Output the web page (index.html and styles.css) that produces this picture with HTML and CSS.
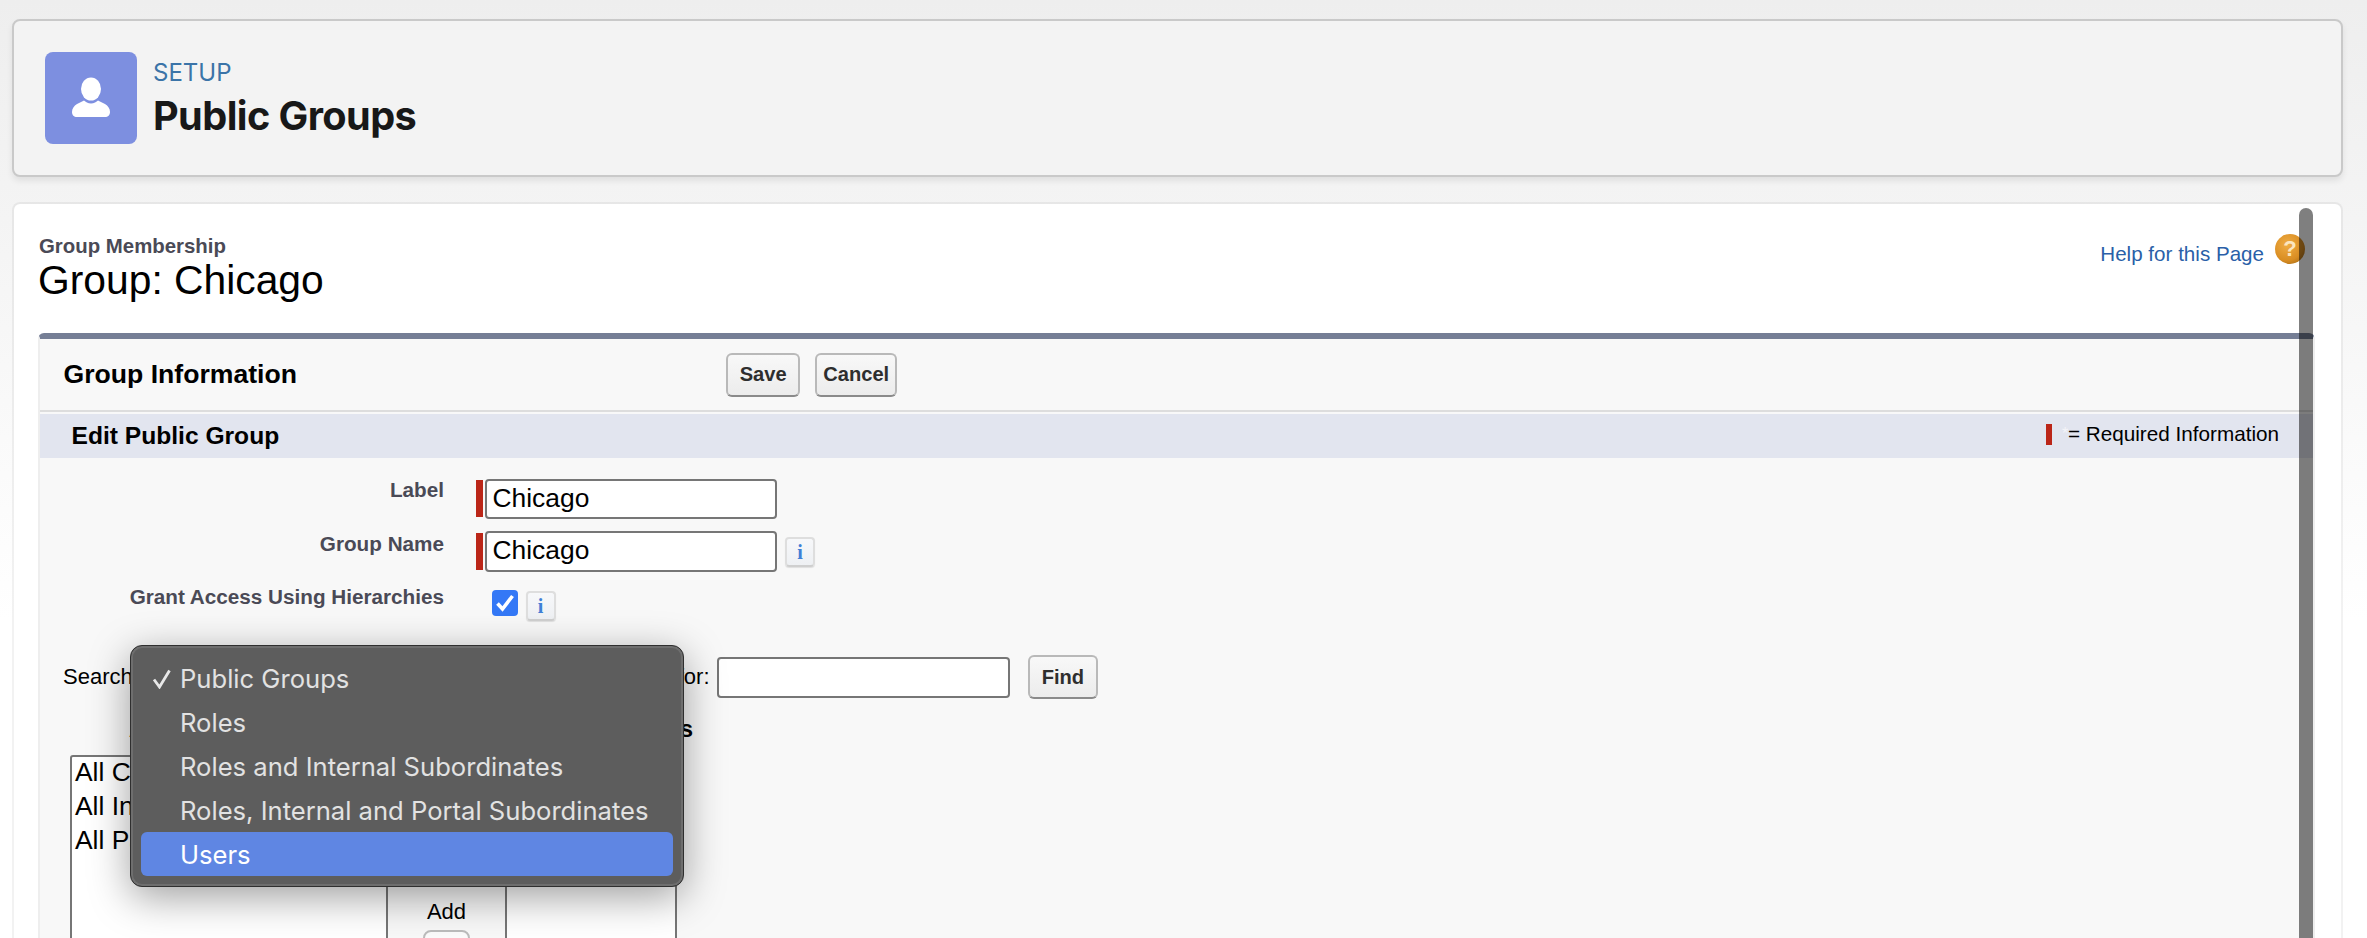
FILE: index.html
```html
<!DOCTYPE html>
<html lang="en">
<head>
<meta charset="utf-8">
<title>Public Groups</title>
<link rel="stylesheet" href="styles.css">
</head>
<body>
<header class="page-header">
  <div class="hero-icon">
    <svg viewBox="0 0 92 92" width="92" height="92"><ellipse cx="46" cy="37" rx="10" ry="11.5" fill="#fff"/><path fill="#fff" d="M27 60c0-3.500 2-6 5-8l7-3.500c1.500 1.500 4 3 7 3s5.500-1.500 7-3l7 3.500c3 2 5 4.500 5 8 0 3-2 5-5 5H32c-3 0-5-2-5-5z"/></svg>
  </div>
  <div class="hero-text">
    <div class="hero-label">SETUP</div>
    <h1 class="hero-title">Public Groups</h1>
  </div>
</header>
<main class="card">
  <div class="title-row">
    <div>
      <div class="subtitle">Group Membership</div>
      <div class="title">Group: Chicago</div>
    </div>
    <div class="help"><a class="help-link">Help for this Page</a><span class="help-icon">?</span></div>
  </div>
  <section class="panel">
    <div class="panel-head">
      <h2 class="panel-title">Group Information</h2>
      <button class="btn">Save</button>
      <button class="btn btn-tight">Cancel</button>
    </div>
    <div class="section-bar">
      <h3 class="section-title">Edit Public Group</h3>
      <div class="required"><span class="req-mark"></span><span class="req-star">*</span><span>= Required Information</span></div>
    </div>
    <div class="form">
      <div class="row row-label">
        <label class="field-label">Label</label>
        <span class="req-bar"></span>
        <input class="text-input" type="text" value="Chicago">
      </div>
      <div class="row row-name">
        <label class="field-label">Group Name</label>
        <span class="req-bar"></span>
        <input class="text-input" type="text" value="Chicago">
        <span class="info info-name">i</span>
      </div>
      <div class="row row-grant">
        <label class="field-label">Grant Access Using Hierarchies</label>
        <span class="checkbox"><svg viewBox="0 0 26 26" width="26" height="26"><path d="M5.500 13.500l5 5.500 10-13" fill="none" stroke="#fff" stroke-width="3.600"/></svg></span>
        <span class="info info-grant">i</span>
      </div>
    </div>
    <div class="search-row">
      <span>Search</span>
      <select class="search-select"><option>Public Groups</option></select>
      <span>for:</span>
      <input class="search-input" type="text">
      <button class="btn btn-find">Find</button>
    </div>
    <div class="list-heads"><span>Available Members</span><span>Selected Members</span></div>
    <div class="lists">
      <div class="listbox">
        <div class="opt">All Customer Portal Users</div>
        <div class="opt">All Internal Users</div>
        <div class="opt">All Partner Users</div>
      </div>
      <div class="move">
        <div class="move-label">Add</div>
        <button class="move-btn" aria-label="Add"></button>
      </div>
      <div class="listbox"></div>
    </div>
  </section>
  <div class="scrollbar"></div>
</main>
<div class="menu">
  <div class="menu-item"><svg class="menu-check" viewBox="0 0 20 20" width="20" height="20"><path d="M2 10.500l5.500 7.500L17.500 1.500" fill="none" stroke="#e8e8e8" stroke-width="2.800"/></svg>Public Groups</div>
  <div class="menu-item">Roles</div>
  <div class="menu-item">Roles and Internal Subordinates</div>
  <div class="menu-item">Roles, Internal and Portal Subordinates</div>
  <div class="menu-item menu-active">Users</div>
</div>
</body>
</html>
```
FILE: styles.css
```css
* { box-sizing: border-box; }
html, body { margin: 0; height: 938px; overflow: hidden; }
body {
  position: relative;
  padding: 19px 24px 0 12px;
  background: linear-gradient(#eeeeee, #ffffff 620px);
  font-family: "Liberation Sans", Arial, sans-serif;
  color: #000;
}
h1, h2, h3 { margin: 0; }

.page-header {
  height: 158px;
  display: flex;
  align-items: center;
  gap: 16px;
  padding-left: 31px;
  background: #f3f3f3;
  border: 2px solid #c9c9c9;
  border-radius: 8px;
  box-shadow: 0 4px 6px rgba(0,0,0,.08);
}
.hero-icon { width: 92px; height: 92px; background: #7d8fe0; border-radius: 8px; flex: none; }
.hero-icon svg { display: block; }
.hero-text { font-family: Inter, "Noto Sans", sans-serif; padding-top: 3px; }
.hero-label { font-size: 24px; line-height: 28px; color: #3b74a8; }
.hero-title { font-size: 39.700px; line-height: 50px; font-weight: 700; color: #181818; letter-spacing: -.6px; margin-top: 4px; }

.card {
  position: relative;
  height: 734px;
  margin: 27px 2px 0;
  padding: 30px 26px 0 24px;
  background: #fff;
  border-radius: 6px 6px 0 0;
  box-shadow: 0 0 0 2px rgba(0,0,0,.05);
  overflow: hidden;
}
.title-row { display: flex; justify-content: space-between; align-items: flex-start; height: 99px; }
.subtitle { font-size: 20.400px; line-height: 24px; font-weight: 700; color: #4a4a56; padding-left: 1px; }
.title { font-size: 40.800px; line-height: 44px; }
.help { display: flex; align-items: flex-start; gap: 11px; margin-right: 10px; }
.help-link { font-size: 20.600px; line-height: 30px; padding-top: 5px; color: #2a5fa8; }
.help-icon {
  width: 30px; height: 30px; border-radius: 50%;
  display: flex; align-items: center; justify-content: center;
  background: radial-gradient(circle at 40% 35%, #f0ad45, #d98d22 60%, #8f5e14);
  color: #fbe6c0; font-weight: 700; font-size: 22px;
}

.panel {
  height: 605px;
  overflow: hidden;
  background: #f8f8f8;
  border: 2px solid #eeeeee;
  border-width: 6px 2px 0;
  border-top-color: #757e95;
  border-radius: 6px 6px 0 0;
}
.panel-head {
  height: 71px;
  display: flex;
  align-items: center;
  gap: 15px;
  padding-left: 23.500px;
}
.panel-title { font-size: 26.600px; font-weight: 700; width: 647.500px; flex: none; }
.btn {
  height: 44px;
  padding: 0 11.700px;
  font: 700 20.100px "Liberation Sans", Arial, sans-serif;
  color: #2e2e2e;
  background: linear-gradient(#f8f8f8, #ececec);
  border: 2px solid #b9b9b9;
  border-bottom-color: #8a8a8a;
  border-radius: 6px;
}
.btn-tight { padding: 0 6px; }
.section-bar {
  height: 48px;
  padding: 4px 34px 0 31.500px;
  display: flex;
  justify-content: space-between;
  align-items: center;
  border-top: 2px solid #dddddd;
  background: linear-gradient(#f8f8f8 2px, #e2e5ef 2px);
}
.section-title { font-size: 24.600px; font-weight: 700; padding-bottom: 2px; }
.required { display: flex; align-items: center; font-size: 20.700px; padding-bottom: 6px; }
.req-mark { width: 6px; height: 21px; background: #bb2618; }
.req-star { color: #f4f4f8; width: 16px; padding-left: 10px; font-size: 16px; }

.form { padding-top: 20px; }
.row { display: flex; align-items: flex-start; }
.row-label { margin-bottom: 12px; }
.row-name { margin-bottom: 13px; height: 41px; }
.row-grant { height: 34px; }
.field-label {
  width: 404px;
  flex: none;
  text-align: right;
  font-size: 20.700px;
  line-height: 24px;
  font-weight: 700;
  color: #4a4a56;
}
.row-name .field-label { padding-top: 1px; }
.req-bar { width: 6.500px; height: 37px; margin: 2px 2px 0 32px; background: #bb2618; flex: none; }
.text-input {
  width: 292.500px;
  height: 40px;
  margin-top: 1px;
  padding: 0 6px 2px;
  font: 26.400px "Liberation Sans", Arial, sans-serif;
  color: #000;
  background: #fff;
  border: 2px solid #767676;
  border-radius: 4px;
  outline: none;
}
.row-name .text-input { height: 41px; margin-top: 0; }
.info {
  width: 30px; height: 30px;
  flex: none;
  display: flex; align-items: center; justify-content: center;
  font: 700 20px "Liberation Serif", serif;
  color: #3f7fd6;
  background: linear-gradient(#f7f8fa, #eef0f3);
  border: 2px solid #dedede;
  border-bottom-color: #cfcfcf;
  border-radius: 4px;
  box-shadow: 0 1px 1px rgba(0,0,0,.1);
}
.info-name { margin: 6px 0 0 8px; }
.checkbox { width: 26px; height: 26px; margin: 5px 0 0 48px; background: #3478f6; border-radius: 4px; flex: none; }
.checkbox svg { display: block; }
.info-grant { margin: 6px 0 0 7.500px; }

.search-row {
  height: 44px;
  margin-top: 36px;
  padding-left: 23px;
  display: flex;
  align-items: center;
  gap: 7px;
  font-size: 22px;
}
.search-select { width: 531px; height: 40px; font: 22px "Liberation Sans", Arial, sans-serif; flex: none; }
.search-input {
  width: 293.500px;
  height: 41px;
  background: #fff;
  border: 2px solid #767676;
  border-radius: 4px;
  outline: none;
  flex: none;
}
.btn-find { margin-left: 11px; }

.list-heads {
  width: 653px;
  margin-top: 16px;
  padding-left: 89px;
  display: flex;
  justify-content: space-between;
  font-size: 24px;
  line-height: 28px;
  font-weight: 700;
}
.lists { display: grid; grid-template-columns: 318px 117px 172px; margin: 12px 0 0 30px; }
.listbox { height: 300px; background: #fff; border: 2px solid #767676; border-radius: 3px; padding: 0 3px; }
.opt { font-size: 26.400px; line-height: 30px; height: 34px; white-space: nowrap; }
.move { padding-top: 144px; display: flex; flex-direction: column; align-items: center; }
.move-label { font-size: 22px; line-height: 26px; }
.move-btn { width: 47px; height: 60px; margin-top: 5px; background: #fbfbfb; border: 2px solid #bcbcbc; border-radius: 8px; }

.scrollbar {
  position: absolute;
  top: 4px;
  right: 28px;
  bottom: 0;
  width: 14px;
  background: rgba(0,0,0,.5);
  border-radius: 7px 7px 0 0;
}

.menu {
  position: absolute;
  left: 130px;
  top: 645px;
  width: 554px;
  height: 242px;
  padding: 10px;
  background: #5d5d5d;
  border: 1px solid #2f2f2f;
  border-radius: 12px;
  box-shadow: inset 0 0 0 2px #6e6e6e, 0 10px 40px rgba(0,0,0,.38);
  font: 400 25.600px Inter, "Noto Sans", sans-serif;
  color: #e2e2e2;
}
.menu-item {
  position: relative;
  height: 44px;
  line-height: 46px;
  padding-left: 39px;
  border-radius: 6px;
  white-space: nowrap;
}
.menu-check { position: absolute; left: 11px; top: 13px; }
.menu-active { background: #5f86e3; color: #fff; }
```
